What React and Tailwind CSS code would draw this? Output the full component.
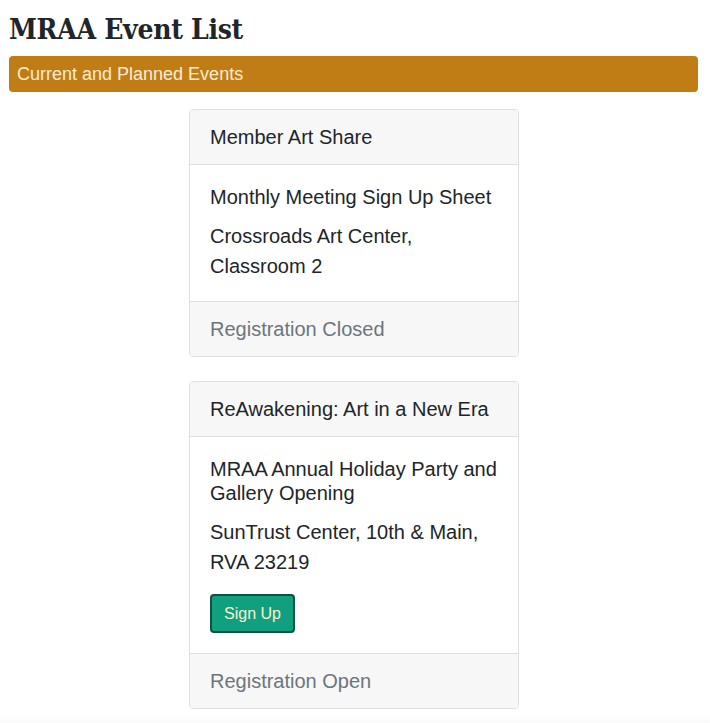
const events = [
  {
    name: "Member Art Share",
    title: "Monthly Meeting Sign Up Sheet",
    place: "Crossroads Art Center, Classroom 2",
    open: false,
  },
  {
    name: "ReAwakening: Art in a New Era",
    title: "MRAA Annual Holiday Party and Gallery Opening",
    place: "SunTrust Center, 10th & Main, RVA 23219",
    open: true,
  },
];

function EventCard({ ev }) {
  return (
    <div className="w-[330px] mx-auto border border-[#dfdfdf] rounded-[4px] overflow-hidden mb-[24px] translate-x-[-1px]">
      <div className="bg-[#f7f7f7] border-b border-[#dfdfdf] px-[20px] py-[12px] text-[20px] leading-[30px] text-[#212529]">
        {ev.name}
      </div>
      <div className="bg-white p-[20px] text-[#212529]">
        <h5 className="text-[20px] leading-[24px] mb-[12px]">{ev.title}</h5>
        <p className={`text-[20px] leading-[30px] ${ev.open ? "mb-[17px]" : ""}`}>{ev.place}</p>
        {ev.open && (
          <button className="h-[39px] px-[12px] bg-[#10a07f] border-2 border-[#0b5241] rounded-[4px] text-[16px] text-[#fbf0d2]">
            Sign Up
          </button>
        )}
      </div>
      <div className="bg-[#f7f7f7] border-t border-[#dfdfdf] px-[20px] py-[12px] text-[20px] leading-[30px] text-[#6c757d]">
        {ev.open ? "Registration Open" : "Registration Closed"}
      </div>
    </div>
  );
}

export default function App() {
  return (
    <div className="bg-white min-h-screen" style={{ fontFamily: '"Liberation Sans", Arial, sans-serif' }}>
      <div className="pl-[9px] pr-[12px] pt-[12px]">
        <h1
          className="text-[28px] leading-[36px] font-bold text-[#212529] mb-[8px] tracking-[-0.3px]"
          style={{ fontFamily: '"DejaVu Serif Condensed", "DejaVu Serif", serif' }}
        >
          MRAA Event List
        </h1>
        <div className="bg-[#c07d15] rounded-[4px] h-[36px] flex items-center px-[8px] text-[18px] text-[#fcebd2] mb-[17px]">
          Current and Planned Events
        </div>
      </div>
      {events.map((ev) => (
        <EventCard key={ev.name} ev={ev} />
      ))}
      <div className="h-[20px] -mt-[20px] bg-gradient-to-b from-white to-[#f6f6f6]" />
    </div>
  );
}
